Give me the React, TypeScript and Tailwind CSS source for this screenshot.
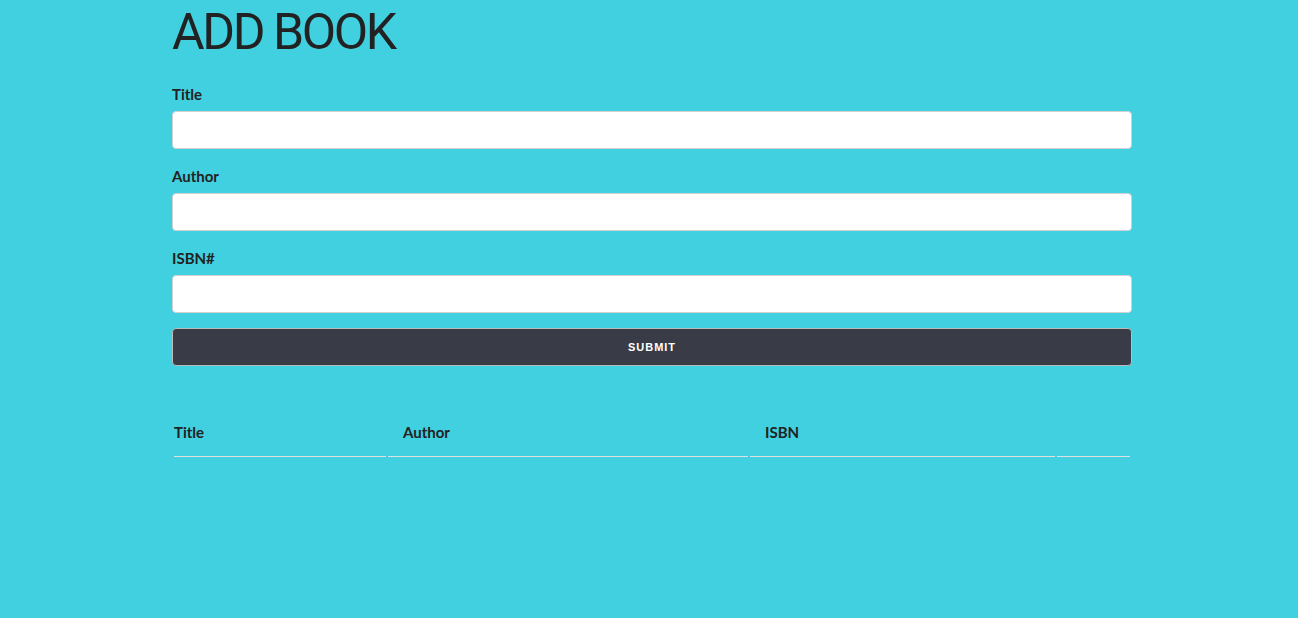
export default function App() {
    const fields = ["Title", "Author", "ISBN#"];

    return (
        <div className="min-h-[618px] w-full bg-[#40d0df] text-[#222] [font-family:Lato,'Open_Sans',sans-serif]">
            <div className="ml-[172px] w-[960px]">
                <h1 className="pt-[2px] text-[50px] leading-[60px] font-normal tracking-[-2.4px] mb-[20px] [font-family:Roboto,Lato,sans-serif]">
                    ADD BOOK
                </h1>
                <form onSubmit={(e) => e.preventDefault()}>
                    {fields.map((f) => (
                        <div key={f}>
                            <label className="block text-[15px] leading-[24px] font-bold mb-[5px]">
                                {f}
                            </label>
                            <input
                                type="text"
                                className="block w-full h-[38px] mb-[15px] bg-white border border-[#d1d1d1] rounded-[4px] px-[10px]"
                            />
                        </div>
                    ))}
                    <button
                        type="submit"
                        className="block w-full h-[38px] bg-[#393c46] border border-[#bbb] rounded-[4px] text-white text-[11px] font-bold tracking-[1px] uppercase [font-family:'Liberation_Sans',Arial,sans-serif]"
                    >
                        Submit
                    </button>
                </form>
                <table className="w-full mt-[40px] border-separate border-spacing-[2px]">
                    <thead>
                        <tr className="text-left">
                            <th className="w-[212px] pl-0 pr-[15px] py-[12px] text-[15px] leading-[24px] font-bold border-b border-[#e1e1e1]">
                                Title
                            </th>
                            <th className="w-[360px] px-[15px] py-[12px] text-[15px] leading-[24px] font-bold border-b border-[#e1e1e1]">
                                Author
                            </th>
                            <th className="w-[305px] px-[15px] py-[12px] text-[15px] leading-[24px] font-bold border-b border-[#e1e1e1]">
                                ISBN
                            </th>
                            <th className="pr-0 py-[12px] border-b border-[#e1e1e1]"></th>
                        </tr>
                    </thead>
                    <tbody></tbody>
                </table>
            </div>
        </div>
    );
}
